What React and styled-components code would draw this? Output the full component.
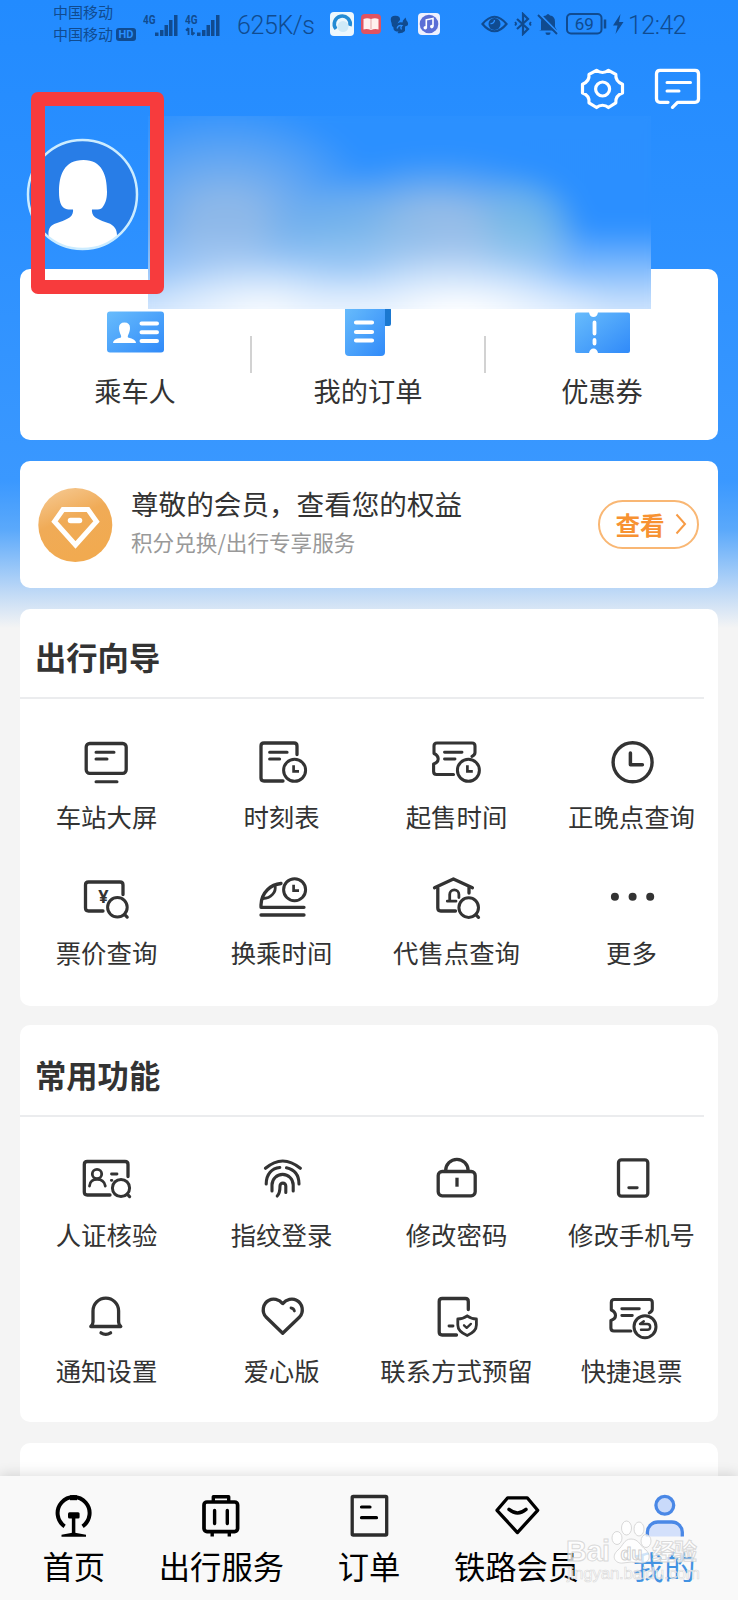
import React from "react";
import styled, { createGlobalStyle } from "styled-components";

const GlobalStyle = createGlobalStyle`
    body {
        margin: 0;
        font-family: "Noto Sans CJK SC", sans-serif;
        color: #333;
    }
    * {
        box-sizing: border-box;
    }
    svg {
        display: block;
        flex: none;
    }
`;

const Page = styled.div`
    position: relative;
    width: 738px;
    height: 1600px;
    display: flex;
    flex-direction: column;
    overflow: hidden;
    background: #f4f4f4 linear-gradient(#228bff 0, #2a8fff 190px, #3a98ff 480px, #5ba9fb 530px, #bfd9f6 592px, #f4f4f4 628px) no-repeat;
`;

/* ---------- status bar ---------- */

const StatusBar = styled.div`
    height: 48px;
    padding-left: 53px;
    display: flex;
    align-items: center;
    color: #104b90;
    flex: none;
`;

const Carriers = styled.div`
    width: 88px;
    margin-top: -2px;
    font-size: 15px;
    line-height: 22px;
`;

const CarrierRow = styled.div`
    display: flex;
    align-items: center;
    gap: 3px;
    white-space: nowrap;
`;

const HdBadge = styled.span`
    width: 20px;
    height: 13px;
    border-radius: 3px;
    background: #104b90;
    color: #2a8fff;
    font: bold 11px/13px "Roboto", sans-serif;
    text-align: center;
`;

const StatusText = styled.span`
    width: ${props => props.$width}px;
    margin-left: ${props => props.$gap || 0}px;
    font: 300 ${props => props.$size || 25}px/30px "Roboto", sans-serif;
    letter-spacing: ${props => props.$spacing || 0}px;
    white-space: nowrap;
    padding-top: 3px;
`;

const StatusIcon = styled.svg`
    margin-left: ${props => props.$gap || 0}px;
`;

/* ---------- header ---------- */

const Header = styled.header`
    height: 221px;
    flex: none;
    display: flex;
    flex-direction: column;
`;

const HeaderTools = styled.div`
    height: 80px;
    padding: 16px 35px 0 0;
    display: flex;
    justify-content: flex-end;
    gap: 22px;
`;

const Avatar = styled.svg`
    margin: 10px 0 0 26px;
`;

const NameMask = styled.div`
    position: absolute;
    left: 148px;
    top: 116px;
    width: 503px;
    height: 193px;
    overflow: hidden;
    &::before {
        content: "";
        position: absolute;
        inset: -20px;
        filter: blur(11px);
        background:
            radial-gradient(ellipse 130px 60px at 135px 217px, rgba(255, 255, 255, .9), rgba(255, 255, 255, 0)),
            radial-gradient(ellipse 160px 65px at 330px 220px, #fff 10%, rgba(255, 255, 255, 0)),
            linear-gradient(rgba(190, 217, 250, 0) 130px, rgba(188, 217, 251, .7) 180px, #cfe4fd 213px),
            radial-gradient(ellipse 60px 60px at 396px 134px, rgba(122, 188, 230, .9) 10%, rgba(122, 188, 230, 0)),
            radial-gradient(ellipse 100px 60px at 215px 145px, rgba(118, 182, 234, .8) 10%, rgba(118, 182, 234, 0)),
            radial-gradient(ellipse 150px 80px at 310px 140px, #94bce8 35%, rgba(148, 188, 232, 0)),
            radial-gradient(ellipse 160px 125px at 98px 130px, #8db8e9 20%, rgba(142, 184, 234, 0)),
            linear-gradient(#2b90ff, #2b8eff);
    }
`;

const MarkFrame = styled.div`
    position: absolute;
    left: 31px;
    top: 92px;
    width: 133px;
    height: 202px;
    border: 14px solid #f73b3d;
    border-radius: 7px;
`;

/* ---------- cards ---------- */

const Content = styled.main`
    flex: 1;
    min-height: 0;
    overflow: hidden;
    padding: 0 20px;
`;

const Card = styled.section`
    height: ${props => props.$height}px;
    margin-bottom: ${props => props.$gap}px;
    background: #fff;
    border-radius: 10px;
`;

const Shortcuts = styled(Card)`
    display: grid;
    grid-template-columns: 230px 2px 232px 2px 232px;
`;

const Shortcut = styled.div`
    display: flex;
    flex-direction: column;
    align-items: center;
    padding-top: 38px;
    font-size: 27.2px;
    line-height: 36px;
    gap: 13px;
`;

const Divider = styled.div`
    width: 2px;
    height: 37px;
    margin-top: 67px;
    background: #d2d2d2;
`;

const Member = styled(Card)`
    display: flex;
    align-items: center;
    padding: 0 19px 0 17px;
`;

const MemberText = styled.div`
    flex: 1;
    margin: -7px 0 0 18px;
    h3 {
        margin: 0;
        font-size: 27.6px;
        font-weight: normal;
        line-height: 42px;
    }
    p {
        margin: 0;
        font-size: 21.6px;
        line-height: 36px;
        color: #999;
    }
`;

const ViewButton = styled.button`
    width: 101px;
    height: 49px;
    padding: 0 0 2px 5px;
    display: flex;
    align-items: center;
    justify-content: center;
    gap: 10px;
    border: 2px solid #f9b774;
    border-radius: 25px;
    background: #fff;
    color: #f79232;
    font: bold 24.6px/34px "Noto Sans CJK SC", sans-serif;
`;

const PanelTitle = styled.h2`
    height: ${props => props.$height}px;
    margin: 0 14px 0 0;
    padding: ${props => props.$height - 64}px 0 0 15px;
    border-bottom: 2px solid #ebecee;
    font-size: 31.3px;
    line-height: 44px;
    font-weight: bold;
`;

const Grid = styled.div`
    display: grid;
    grid-template-columns: repeat(4, 1fr);
    grid-auto-rows: 136px;
    margin: 0 -1px;
    padding-top: 38px;
`;

const Item = styled.div`
    display: flex;
    flex-direction: column;
    align-items: center;
    font-size: 25.4px;
    line-height: 36px;
    gap: 11px;
    white-space: nowrap;
`;

/* ---------- tab bar ---------- */

const TabBar = styled.nav`
    height: 124px;
    flex: none;
    display: flex;
    background: #f9f9f9;
    box-shadow: 0 -2px 12px rgba(0, 0, 0, .13);
    z-index: 1;
`;

const Tab = styled.div`
    flex: 1;
    display: flex;
    flex-direction: column;
    align-items: center;
    padding-top: 15px;
    gap: 3px;
    font-size: 31.3px;
    line-height: 44px;
    white-space: nowrap;
    color: ${props => props.$active ? "#4292e2" : "#000"};
`;

const Watermark = styled.div`
    position: absolute;
    z-index: 2;
    left: 564px;
    top: 1519px;
`;

/* ---------- icons ---------- */

const Line = ({ children, color = "#333" }) => (
    <svg width="60" height="50" viewBox="0 0 60 50" fill="none" stroke={color} strokeWidth="3.3" strokeLinecap="round" strokeLinejoin="round">
        {children}
    </svg>
);

const Clock = ({ x, y }) => (
    <>
        <circle cx={x} cy={y} r="11" strokeWidth="3" />
        <path d={`M${x - 1} ${y - 5}v6h5.400`} strokeWidth="2.700" strokeLinecap="butt" strokeLinejoin="miter" />
    </>
);

const Lens = ({ x, y, r = 9.8 }) => (
    <>
        <circle cx={x} cy={y} r={r} strokeWidth="3" />
        <path d={`M${x + r * 0.72} ${y + r * 0.72}L${x + r} ${y + r}`} strokeWidth="3.200" />
    </>
);

const Ticket = () => (
    <g strokeWidth="3.100">
        <path d="M45 19.3Q48 18 48 15.5V9q0-3-3-3H10q-3 0-3 3v7.500Q11.2 18.500 11.2 22T6.6 27v7.500q0 3 3 3H26.500" />
        <path d="M17.500 15.3h17.500M17.500 22h10.500" strokeWidth="2.900" />
    </g>
);

const guideItems = [
    { label: "车站大屏", icon: <><rect x="9.2" y="6.5" width="40" height="29.8" rx="3.5" /><path d="M19 15.3h18M19 22h11M19 44.7h21" strokeWidth="3" /></> },
    { label: "时刻表", icon: <><path d="M45 17.5V9q0-3-3-3H12q-3 0-3 3V41q0 3 3 3H31" /><path d="M17.6 15.3h17.5M17.6 22h10" strokeWidth="3" /><Clock x={42.6} y={33.3} /></> },
    { label: "起售时间", icon: <><Ticket /><Clock x={41.4} y={33.3} /></> },
    { label: "正晚点查询", icon: <><circle cx="30.6" cy="25.3" r="19.5" strokeWidth="3.4" /><path d="M28.4 16v11.8h12" strokeWidth="3.5" /></> },
    { label: "票价查询", icon: <><path d="M46 21.5V12q0-3-3-3H11.5q-3 0-3 3V35q0 3 3 3H26" /><text x="26.4" y="29.5" fontSize="18" fontWeight="bold" fontFamily="Noto Sans, sans-serif" textAnchor="middle" fill="#333" stroke="none">¥</text><Lens x={40.4} y={34.3} /></> },
    { label: "换乘时间", icon: <><path d="M29 10.5C19 11.5 9.5 19 9 32v2.3H52M9 42H52" /><path d="M23 12.5C24.5 19 19 25.5 11 25.5" strokeWidth="2.8" /><Clock x={42.6} y={16.7} /></> },
    { label: "代售点查询", icon: <><path d="M7.5 14.7L26.4 6l19 8.7" /><path d="M10.8 15V35q0 3 3 3H28.5M42 14.7V20" /><path d="M20.3 28.2H29M22.7 28V21.5a4.6 4.6 0 0 1 9.2 0V24.5" strokeWidth="2.8" /><Lens x={41.7} y={34.6} /></> },
    { label: "更多", icon: <g fill="#333" stroke="none"><circle cx="12.9" cy="23.7" r="4" /><circle cx="30.6" cy="23.7" r="4" /><circle cx="48.2" cy="23.7" r="4" /></g> },
];

const commonItems = [
    { label: "人证核验", icon: <><path d="M51 21.5V9.5q0-3-3-3H10.3q-3 0-3 3V37q0 3 3 3H33" /><g strokeWidth="2.8"><circle cx="20" cy="19" r="4.7" /><path d="M12.5 31C13 22 27 22 28.3 31M34.5 19h5.5M34.3 25.3h.6" /></g><Lens x={44} y={33} r={8.6} /></> },
    { label: "指纹登录", icon: <g strokeWidth="3.1"><path d="M13.5 13.3Q30.6-1.3 48.3 13.3" /><path d="M14.2 29C14.2 19 20 13.2 27.8 12.5M34.5 12.8C42 14.5 47 20 47 29" /><path d="M20 36V30a10.6 10.6 0 0 1 21.2 0V36" /><path d="M25.2 41C27.8 38.5 28 36 28 31a2.8 2.8 0 0 1 5.8 0V37.5" /></g> },
    { label: "修改密码", icon: <><rect x="11.2" y="16.5" width="37" height="24.3" rx="4" /><path d="M18.6 16a11.3 11.7 0 0 1 22.6 0" /><path d="M30 22.7v9" strokeLinecap="butt" /></> },
    { label: "修改手机号", icon: <><rect x="16.5" y="4.8" width="29.3" height="36.4" rx="3" /><path d="M26.8 32.7h8.4" strokeWidth="2.9" /></> },
    { label: "通知设置", icon: <><path d="M13.8 35.5Q16 33.5 16 31V20a12.8 12.8 0 0 1 25.6 0V31Q41.6 33.5 43.8 35.5Z" /><path d="M24 41.8Q28.8 44.8 33.6 41.8" /></> },
    { label: "爱心版", icon: <><path d="M30.7 12.6C27 8 21 7 17 9.2C10.5 12.5 9.5 21 14 26L30.7 42.3L47.6 26C52 21 51 12.5 44.5 9.2C40.4 7 34.5 8 30.7 12.6Z" /><path d="M39 17Q41.8 17.3 42.4 20" strokeWidth="2.8" /></> },
    { label: "联系方式预留", icon: <><path d="M41.3 18.5V10.5q0-3-3-3H15.2q-3 0-3 3V41q0 3 3 3H29.5" /><path d="M22 35h4" strokeWidth="2.9" /><path d="M40.2 24.8Q44.5 28 49.4 28V34Q49.4 40.5 40.2 44.5Q30.8 40.5 30.8 34V28Q36 28 40.2 24.8Z" strokeWidth="2.8" /><path d="M37 34.3l2.7 2.6 4.2-4" strokeWidth="2.3" /></> },
    { label: "快捷退票", icon: <><g transform="translate(2.3 2.5)"><Ticket /></g><circle cx="43" cy="35.7" r="11" strokeWidth="3" /><path d="M41.8 30.2L38 33h7.3a2.9 2.9 0 0 1 0 5.8H39" strokeWidth="2.4" /></> },
];

const tabs = [
    { label: "首页", icon: <><path d="M20.6 35.3A16 16 0 1 1 38.6 35.3" strokeWidth="4" strokeLinecap="butt" /><path d="M26 4.2h7v5h-7z" fill="#000" stroke="none" /><rect x="24" y="21.3" width="11.6" height="6.2" rx="1.5" fill="#000" stroke="none" /><path d="M29.6 27V44" strokeWidth="3.5" strokeLinecap="butt" /><path d="M17.5 45.7v-2L29.6 41.5 42 43.7v2z" fill="#000" stroke="none" /></> },
    { label: "出行服务", icon: <><rect x="13" y="11" width="33.6" height="29.6" rx="3" strokeWidth="3.7" /><path d="M22.3 10V5.7H37.7V10M23.6 19.5v13M36.3 19.5v13" strokeWidth="3.4" /><path d="M21.2 42v3.500M38.3 42v3.500" strokeWidth="3.4" strokeLinecap="butt" /></> },
    { label: "订单", icon: <><rect x="13.2" y="5.5" width="34.5" height="38.5" rx="1" stroke="#2c2c2c" /><path d="M22.5 16h8.5M22.5 26.7h15" strokeWidth="3.2" /></> },
    { label: "铁路会员", icon: <><path d="M20.7 6.8H40.2L50.7 19.3 30.4 41.6 10 19.3Z" /><path d="M22 18.4Q30.6 25.4 39 18.4" strokeWidth="3.4" /></> },
    { label: "我的", active: true, icon: <><circle cx="30.8" cy="14.3" r="8.9" fill="#c9dafa" /><path d="M13.4 45.5V41a10.5 10.5 0 0 1 10.5-10H37.8A10.5 10.5 0 0 1 48.3 41V45.5" fill="#d3e0fb" strokeLinecap="butt" /></> },
];

const Signal = ({ data }) => (
    <StatusIcon width="36" height="28" viewBox="0 -4 36 28" fill="#104b90" $gap={data ? 6 : 2}>
        <text x="0" y="10" fontFamily="Roboto, sans-serif" fontWeight="bold" fontSize="12" textLength="12.5" lengthAdjust="spacingAndGlyphs">4G</text>
        {data && <path d="M3.500 14v7M1 16.500L3.500 14M7 14v7M9.500 18.500L7 21" stroke="#104b90" strokeWidth="1.8" fill="none" />}
        <path d="M12 18.500h3.500v3.500h-3.500zM17 16h3.500v6h-3.500zM21.500 11h3.500v11h-3.500zM26 6h3.500v16h-3.500zM31 1h3.500v21h-3.500z" />
    </StatusIcon>
);

const Status = () => (
    <StatusBar>
        <Carriers>
            <CarrierRow>中国移动</CarrierRow>
            <CarrierRow>中国移动<HdBadge>HD</HdBadge></CarrierRow>
        </Carriers>
        <Signal />
        <Signal data />
        <StatusText $width={78} $gap={16} $spacing={-0.4}>625K/s</StatusText>
        {/* browser */}
        <StatusIcon width="24" height="24" viewBox="0 0 24 24" $gap={15}>
            <rect width="24" height="24" rx="4" fill="#edf7fd" />
            <path d="M6 17A8 8 0 1 1 20 14" fill="none" stroke="#248bd4" strokeWidth="3.5" />
            <circle cx="13" cy="14.500" r="5.500" fill="#cfeaf8" />
        </StatusIcon>
        {/* reader */}
        <StatusIcon width="20" height="20" viewBox="0 0 20 20" $gap={7}>
            <rect width="20" height="20" rx="4" fill="#e05360" />
            <path d="M2.500 5Q6 3.300 10 5Q14 3.300 17.500 5V15.500Q14 14.500 10 16Q6 14.500 2.500 15.500z" fill="#fff0ee" />
            <path d="M10 5v10" stroke="#e6a5a8" />
        </StatusIcon>
        {/* squirrel */}
        <StatusIcon width="19" height="19" viewBox="0 0 19 19" $gap={9} fill="#104b90">
            <path d="M1.500 8Q-1 1 5 .8Q10.500 .5 10 5Q8 7 7.500 8.500Q10 6.500 12.500 7.500L13 5.500 15.500 2.500 16.500 5.500Q19 8 17.500 10.500L15 11.500V16Q12 18.800 7.500 18L8.500 16.500Q3 16.500 3.500 12.500Q1.500 11.500 1.500 8z" />
            <path d="M7 13.500Q8 9.500 12 10.500Q10 12 11.500 14.500" fill="none" stroke="#2a8fff" strokeWidth="1.2" />
        </StatusIcon>
        {/* music */}
        <StatusIcon width="22" height="22" viewBox="0 0 22 22" $gap={9}>
            <rect width="22" height="22" rx="4" fill="#eef1ff" />
            <circle cx="11" cy="11" r="9.300" fill="#5b6ed6" />
            <path d="M8.300 14.500V6.800L15 5.500V13.300" stroke="#fff" strokeWidth="1.600" fill="none" />
            <circle cx="7.300" cy="14.700" r="1.800" fill="#fff" />
            <circle cx="13.800" cy="13.600" r="1.800" fill="#fff" />
        </StatusIcon>
        {/* eye comfort */}
        <StatusIcon width="27" height="18" viewBox="0 0 27 18" $gap={41}>
            <path d="M1.500 9Q13.500-5.500 25.500 9Q13.500 23.500 1.500 9z" fill="none" stroke="#104b90" strokeWidth="2.200" />
            <circle cx="13.500" cy="9" r="6" fill="#104b90" />
            <path d="M13.500 5a3.500 3.500 0 0 1-4 3.500" fill="none" stroke="#2a8fff" strokeWidth="1.300" />
        </StatusIcon>
        {/* bluetooth */}
        <StatusIcon width="18" height="24" viewBox="0 0 18 24" $gap={6} fill="none" stroke="#104b90" strokeWidth="2.200">
            <path d="M3 7l11 10-5 5V2l5 5L3 17" />
            <path d="M1 11.500l1.500-1M1 12l1.500 1M17 11.500l-1.500-1M17 12l-1.500 1" strokeWidth="2.400" />
        </StatusIcon>
        {/* muted */}
        <StatusIcon width="22" height="24" viewBox="0 0 22 24" $gap={5}>
            <path d="M4 18V10Q4 4 9 3.500Q11 .5 13 3.500Q18 4 18 10V15L20 18.500H2z" fill="#104b90" />
            <path d="M8.500 20.500h5a2.500 2.500 0 0 1-5 0z" fill="#104b90" />
            <path d="M2.500 2L22 22" stroke="#2a8fff" strokeWidth="2" />
            <path d="M1 3L20 22" stroke="#104b90" strokeWidth="2" />
        </StatusIcon>
        {/* battery */}
        <StatusIcon width="41" height="22" viewBox="0 0 41 22" $gap={7} fill="none" stroke="#104b90">
            <rect x="1" y="1" width="34.500" height="19.500" rx="4" strokeWidth="2" />
            <path d="M39 6.500v9" strokeWidth="2.500" />
            <text x="18.300" y="16.800" fill="#104b90" stroke="none" fontFamily="Roboto, sans-serif" fontSize="17" textAnchor="middle">69</text>
        </StatusIcon>
        <StatusIcon width="12" height="20" viewBox="0 0 12 20" $gap={5} fill="#104b90">
            <path d="M8.500 0L1 11.500H5.500L3.500 20L11.500 8H7z" />
        </StatusIcon>
        <StatusText $gap={4} $size={25} $spacing={-0.5}>12:42</StatusText>
    </StatusBar>
);

const Profile = () => (
    <Header>
        <HeaderTools>
            <svg width="52" height="50" viewBox="0 0 52 50" fill="none" stroke="#fff" strokeWidth="3.200" strokeLinejoin="round">
                <path d="M19.500 6.300C23 9 28 9 31.500 6.300L38.800 10.400C38.500 15 41 18.500 45.500 20.200V29C41 30.500 38.500 34.300 38.800 38.800L31.500 43.500C28 40.500 23 40.500 19.500 43.500L12 38.800C12.500 34.300 10 30.500 5.500 29V20.200C10 18.500 12.500 15 12 10.400Z" />
                <circle cx="25.600" cy="25" r="7" />
            </svg>
            <svg width="52" height="50" viewBox="0 0 52 50" fill="none" stroke="#fff" strokeWidth="3.300" strokeLinecap="round" strokeLinejoin="round">
                <path d="M17 38.300H9q-3.500 0-3.500-3.500V9.800q0-3.500 3.500-3.500H44q3.500 0 3.500 3.500V34.800q0 3.500-3.500 3.500H26.500L21.500 43.300" />
                <path d="M16 18.500H39.500M16 27H28" strokeWidth="3" />
            </svg>
        </HeaderTools>
        <Avatar width="113" height="113" viewBox="0 0 113 113">
            <defs>
                <clipPath id="face"><circle cx="56.500" cy="56.500" r="54.500" /></clipPath>
            </defs>
            <circle cx="56.500" cy="56.500" r="54.500" fill="#287de7" />
            <path clipPath="url(#face)" fill="#fff" d="M57.500 22C38 22 33 37 33 54C33 63 35 68 38 70C41 72 44 71.500 47 71.500C48 80 39 82 31 85C24 87 22 91 22.500 98V113H91V98C91 91 88 87 82 85C74 82 65 80 66 71.500C70 71.500 74 72 76 70C79 66 81 62 81 54C81 37 76 22 57.500 22Z" />
            <circle cx="56.500" cy="56.500" r="54.500" fill="none" stroke="#ccecff" strokeWidth="2.500" />
        </Avatar>
    </Header>
);

const Panel = ({ title, titleHeight, items, gap }) => (
    <Card $height={397} $gap={gap}>
        <PanelTitle $height={titleHeight}>{title}</PanelTitle>
        <Grid>
            {items.map(item => (
                <Item key={item.label}>
                    <Line>{item.icon}</Line>
                    {item.label}
                </Item>
            ))}
        </Grid>
    </Card>
);

const App = () => {
    return (
        <Page>
            <GlobalStyle />
            <Status />
            <Profile />
            <Content>
                <svg width="0" height="0">
                    <defs>
                        <linearGradient id="blue" x1="0" y1="0" x2="1" y2="1">
                            <stop offset="0" stopColor="#68bcfc" />
                            <stop offset="1" stopColor="#308af9" />
                        </linearGradient>
                        <linearGradient id="gold" x1="0" y1="0" x2="0.4" y2="1">
                            <stop offset="0" stopColor="#f6cc98" />
                            <stop offset="0.5" stopColor="#f0ab57" />
                            <stop offset="1" stopColor="#f1aa50" />
                        </linearGradient>
                    </defs>
                </svg>
                <Shortcuts $height={171} $gap={21}>
                    <Shortcut>
                        <svg width="60" height="52" viewBox="0 0 60 52">
                            <rect x="2" y="4.500" width="57" height="41" rx="3" fill="url(#blue)" />
                            <path d="M8 36Q8 32 16 30.500C17 28.500 14 26 14 21Q14 15.500 19.500 15.500T25 21C25 26 22 28.500 23 30.500Q31 32 31 36z" fill="#fff" />
                            <path d="M36.500 16.500h15.500M36.500 25.300h15.500M36.500 34h15.500" stroke="#fff" strokeWidth="4" strokeLinecap="round" />
                        </svg>
                        乘车人
                    </Shortcut>
                    <Divider />
                    <Shortcut>
                        <svg width="60" height="52" viewBox="0 0 60 52">
                            <path d="M40 0h10q3 0 3 3V17q0 2-2 2H40z" fill="#1b78d0" />
                            <path d="M7 0H47V45q0 4-4 4H11q-4 0-4-4z" fill="url(#blue)" />
                            <path d="M18 15.500h16M18 25h16M18 33.500h16" stroke="#fff" strokeWidth="4.200" strokeLinecap="round" />
                        </svg>
                        我的订单
                    </Shortcut>
                    <Divider />
                    <Shortcut>
                        <svg width="60" height="52" viewBox="0 0 60 52">
                            <path d="M5 5.500H17Q18 10 21.500 10T26 5.500H56q2 0 2 2V44q0 2-2 2H26Q25 41.500 21.500 41.500T17 46H5q-2 0-2-2V7.500q0-2 2-2z" fill="url(#blue)" />
                            <path d="M22.500 15.500v11M22.500 33v3.500" stroke="#fff" strokeWidth="3.800" strokeLinecap="round" />
                        </svg>
                        优惠券
                    </Shortcut>
                </Shortcuts>
                <Member $height={127} $gap={21}>
                    <svg width="76" height="76" viewBox="0 0 76 76">
                        <circle cx="38.300" cy="38" r="37" fill="url(#gold)" />
                        <path d="M26 22.500H51L59.500 34.500 38.500 58 17.500 34.500Z" fill="none" stroke="#fff" strokeWidth="5" />
                        <path d="M33.500 33.500h9" stroke="#fff" strokeWidth="5.500" strokeLinecap="round" />
                    </svg>
                    <MemberText>
                        <h3>尊敬的会员，查看您的权益</h3>
                        <p>积分兑换/出行专享服务</p>
                    </MemberText>
                    <ViewButton>
                        查看
                        <svg width="12" height="22" viewBox="0 0 12 22" fill="none" stroke="#f79b45" strokeWidth="2">
                            <path d="M1.500 1.500L10 11 1.500 20.500" />
                        </svg>
                    </ViewButton>
                </Member>
                <Panel title="出行向导" titleHeight={90} items={guideItems} gap={19} />
                <Panel title="常用功能" titleHeight={92} items={commonItems} gap={21} />
                <Card $height={60} $gap={0} />
            </Content>
            <TabBar>
                {tabs.map(tab => (
                    <Tab key={tab.label} $active={tab.active}>
                        <Line color={tab.active ? "#4a88e6" : "#000"}>{tab.icon}</Line>
                        {tab.label}
                    </Tab>
                ))}
            </TabBar>
            <NameMask />
            <MarkFrame />
            <Watermark>
                <svg width="140" height="72" viewBox="0 0 140 72" fill="#fff" fillOpacity=".75" stroke="#d0d0d0" strokeOpacity=".8" strokeWidth="1">
                    <text x="2" y="42" fontFamily="Liberation Sans, sans-serif" fontWeight="bold" fontSize="29" textLength="44">Bai</text>
                    <ellipse cx="53" cy="19" rx="5" ry="6.500" />
                    <ellipse cx="62.500" cy="9" rx="5" ry="7" />
                    <ellipse cx="75" cy="10" rx="5" ry="7" />
                    <ellipse cx="82" cy="22" rx="5" ry="6.500" />
                    <path d="M67 20C60 20 59 27 54 31C46 38 52 45 59 44Q67 42 76 44C85 45 88 37 82 31C76 27 75 20 67 20Z" />
                    <text x="67.500" y="41" fontFamily="Liberation Sans, sans-serif" fontWeight="bold" fontSize="18" textAnchor="middle" stroke="#c4c4c4">du</text>
                    <text x="88" y="41" fontFamily="Noto Sans CJK SC, sans-serif" fontWeight="bold" fontSize="23" textLength="45">经验</text>
                    <text x="3" y="60" fontFamily="Liberation Sans, sans-serif" fontSize="17" textLength="133" strokeWidth=".6">jingyan.baidu.com</text>
                </svg>
            </Watermark>
        </Page>
    );
};

export default App;
